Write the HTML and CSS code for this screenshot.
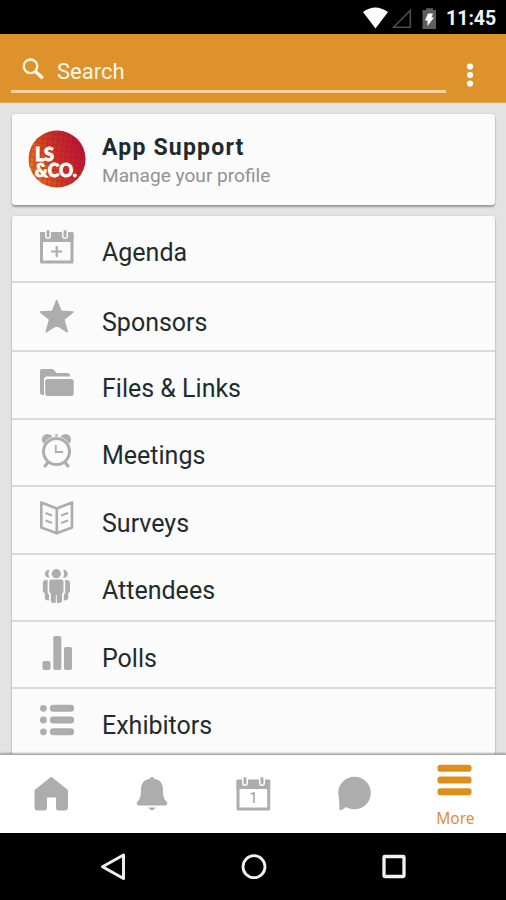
FILE: index.html
```
<!DOCTYPE html>
<html lang="en">
<head>
    <meta charset="UTF-8">
    <meta name="viewport" content="width=device-width, initial-scale=1.0">
    <title>More</title>
    <link rel="stylesheet" href="styles.css">
</head>
<body>
    <div class="status-bar">
        <svg class="status-icons" width="76" height="24" viewBox="0 0 76 24">
            <path fill="#fff" d="M1 7Q13 -2 26 7L13.500 23.500Z"/>
            <path fill="none" stroke="#4d4d4d" stroke-width="1.600" d="M31.500 22.300L48.300 5.500V22.300Z"/>
            <path fill="#5e5e5e" d="M60.500 5H64V3.300H71V5H74V24H60.500Z"/>
            <path fill="#fff" d="M66 8.500H71L69.500 12.500H72L65.500 21V15.500H63Z"/>
        </svg>
        <span class="time">11:45</span>
    </div>

    <div class="header">
        <div class="search">
            <svg class="search-icon" width="24" height="24" viewBox="0 0 24 24">
                <circle cx="8.500" cy="9.300" r="6.800" fill="none" stroke="#fff8e6" stroke-width="2.300"/>
                <path stroke="#fff8e6" stroke-width="3.400" d="M13.500 14.500L20.800 21.300"/>
            </svg>
            <span class="search-text">Search</span>
        </div>
        <svg class="dots" width="8" height="26" viewBox="0 0 8 26">
            <g fill="#fff">
                <circle cx="4" cy="4.500" r="3.100"/>
                <circle cx="4" cy="13" r="3.100"/>
                <circle cx="4" cy="21.500" r="3.100"/>
            </g>
        </svg>
    </div>

    <div class="content">
        <div class="card profile">
            <svg class="avatar" width="58" height="58" viewBox="0 0 58 58">
                <defs>
                    <linearGradient id="avatarFill" x1="0" y1="0.700" x2="1" y2="0.300">
                        <stop offset="0" stop-color="#ed7a1c"/>
                        <stop offset="0.500" stop-color="#cf3426"/>
                        <stop offset="1" stop-color="#bd1038"/>
                    </linearGradient>
                    <pattern id="weave" width="5" height="5" patternUnits="userSpaceOnUse" patternTransform="rotate(8)">
                        <path d="M0 1H5M1 0V5" stroke="#8f1420" stroke-opacity="0.380" stroke-width="1.200"/>
                    </pattern>
                </defs>
                <circle cx="29" cy="29" r="28.500" fill="url(#avatarFill)"/>
                <circle cx="29" cy="29" r="28.500" fill="url(#weave)"/>
                <text class="avatar-text" x="7" y="31" textLength="19">LS</text>
                <text class="avatar-text" x="7" y="46.500" textLength="42" lengthAdjust="spacingAndGlyphs">&amp;CO.</text>
            </svg>
            <div class="profile-info">
                <div class="name">App Support</div>
                <div class="manage">Manage your profile</div>
            </div>
        </div>

        <div class="card menu">
            <div class="row">
                <svg class="icon" viewBox="0 0 36 36">
                    <path fill="none" stroke="#adadad" stroke-width="3" stroke-linejoin="round" d="M3.500 5V33H34V5"/>
                    <path fill="#adadad" d="M2 4Q2 3 3 3H34.500Q35.500 3 35.500 4V13H2Z"/>
                    <path stroke="#fbfbfb" stroke-width="6" stroke-linecap="round" d="M10 3V7M27 3V7"/>
                    <path stroke="#adadad" stroke-width="3" stroke-linecap="round" d="M10 2.500V7M27 2.500V7"/>
                    <path stroke="#adadad" stroke-width="2.200" d="M18.700 17V28M13.200 22.500H24.200"/>
                </svg>
                <span>Agenda</span>
            </div>
            <div class="row row-tall">
                <svg class="icon" viewBox="0 0 36 36">
                    <path fill="#adadad" stroke="#adadad" stroke-width="1.500" stroke-linejoin="round" d="M18.700 1.500L23 12.300L35 13L25.800 20.500L29.300 32.800L18.700 26L8.200 32.800L11.700 20.500L2.500 13L14.400 12.300Z"/>
                </svg>
                <span>Sponsors</span>
            </div>
            <div class="row">
                <svg class="icon" viewBox="0 0 36 36">
                    <path fill="#adadad" d="M2 6Q2 4 4 4H14Q15 4 16 5L18.500 8H30Q32 8 32 11.500H9Q6 11.500 6 14.500V30Q2 30.500 2 27Z"/>
                    <rect x="7.200" y="14" width="28.500" height="17" rx="2.500" fill="#adadad"/>
                </svg>
                <span>Files &amp; Links</span>
            </div>
            <div class="row">
                <svg class="icon" viewBox="0 0 36 36">
                    <g fill="#adadad">
                        <circle cx="9.500" cy="6.500" r="5.500"/>
                        <circle cx="27.500" cy="6.500" r="5.500"/>
                        <rect x="17.300" y="1" width="2.200" height="3"/>
                    </g>
                    <circle cx="18.500" cy="18.500" r="15" fill="#fbfbfb"/>
                    <path stroke="#adadad" stroke-width="3.200" stroke-linecap="round" d="M9.500 30L7 33M27.500 30L30 33"/>
                    <circle cx="18.500" cy="18.500" r="13" fill="none" stroke="#adadad" stroke-width="3"/>
                    <path fill="none" stroke="#adadad" stroke-width="1.800" d="M17.800 12V19H25"/>
                </svg>
                <span>Meetings</span>
            </div>
            <div class="row">
                <svg class="icon" viewBox="0 0 36 36">
                    <path fill="none" stroke="#adadad" stroke-width="2.700" stroke-linejoin="round" d="M3.300 2.500L18.800 8.500L34 2.500V27.500L18.800 33.300L3.300 27.500ZM18.800 8.500V33"/>
                    <path stroke="#adadad" stroke-width="2.200" d="M7.500 13L14 15.500M7.500 20.500L14 23M23 15.500L30 13M23 23L30 20.500"/>
                </svg>
                <span>Surveys</span>
            </div>
            <div class="row">
                <svg class="icon" viewBox="0 0 36 36">
                    <g fill="#adadad">
                        <circle cx="18.300" cy="5.700" r="4.600"/>
                        <path d="M11.500 1.800Q7 2 7 6Q7 9.500 11.500 10Q9.500 6 11.500 1.800ZM25.300 1.800Q29.700 2 29.700 6Q29.700 9.500 25.300 10Q27 6 25.300 1.800Z"/>
                        <path d="M14 11.500H23Q25.500 11.500 25.500 14.500V23.500Q25.500 25 24 25V32Q24 35 21.500 35H20Q18.800 35 18.800 33.500V27H17.800V33.500Q17.800 35 16.500 35H15Q12.800 35 12.800 32V25Q11.200 25 11.200 23.500V14.500Q11.200 11.500 14 11.500Z"/>
                        <path d="M9.600 12Q4.800 11.500 4.800 15V23Q4.800 24.500 6.800 25V30Q7 32.500 11 32.500V26.500Q9.600 26 9.600 24ZM27.200 12Q32 11.500 32 15V23Q32 24.500 30.200 25V30Q30 32.500 25.800 32.500V26.500Q27.200 26 27.200 24Z"/>
                    </g>
                </svg>
                <span>Attendees</span>
            </div>
            <div class="row">
                <svg class="icon" viewBox="0 0 36 36">
                    <g fill="#adadad">
                        <rect x="4.500" y="26" width="8" height="9" rx="1.800"/>
                        <rect x="15.300" y="1" width="8" height="34" rx="1.800"/>
                        <rect x="26" y="12" width="8" height="23" rx="1.800"/>
                    </g>
                </svg>
                <span>Polls</span>
            </div>
            <div class="row">
                <svg class="icon" viewBox="0 0 36 36">
                    <g fill="#adadad">
                        <circle cx="5.400" cy="6.300" r="3.400"/>
                        <circle cx="5.400" cy="18" r="3.400"/>
                        <circle cx="5.400" cy="29.800" r="3.400"/>
                        <rect x="12" y="2.800" width="24" height="7" rx="3"/>
                        <rect x="12" y="14.500" width="24" height="7" rx="3"/>
                        <rect x="12" y="26.300" width="24" height="7" rx="3"/>
                    </g>
                </svg>
                <span>Exhibitors</span>
            </div>
        </div>
    </div>

    <div class="tab-bar">
        <div class="tab">
            <svg class="icon" viewBox="0 0 36 36">
                <path fill="#adadad" stroke="#adadad" stroke-width="2" stroke-linejoin="round" d="M18.300 2L34 14.500V31Q34 33.500 32 33.500H25.500Q24 33.500 24 31.500V20.500H13V31.500Q13 33.500 11.500 33.500H4.500Q2.500 33.500 2.500 31V14.500Z"/>
            </svg>
        </div>
        <div class="tab">
            <svg class="icon" viewBox="0 0 36 36">
                <path fill="#adadad" d="M18 1Q20 1 20.500 3C27 4 29 8 29 14C29 22 31 24 33 26Q34 29 31 29.500H5Q2 29 3 26C5 24 7 22 7 14C7 8 9 4 15.500 3Q16 1 18 1ZM14 31.500H22L18 34.700Z"/>
            </svg>
        </div>
        <div class="tab">
            <svg class="icon" viewBox="0 0 36 36">
                <path fill="none" stroke="#adadad" stroke-width="3" stroke-linejoin="round" d="M3 5V33H33.700V5"/>
                <path fill="#adadad" d="M1.500 4.500Q1.500 3.500 2.500 3.500H34Q35.200 3.500 35.200 4.500V13H1.500Z"/>
                <path stroke="#fff" stroke-width="6" stroke-linecap="round" d="M10 3V7M27 3V7"/>
                <path stroke="#adadad" stroke-width="3" stroke-linecap="round" d="M10 2.500V7M27 2.500V7"/>
                <text class="day" x="18.500" y="26.500">1</text>
            </svg>
        </div>
        <div class="tab">
            <svg class="icon" viewBox="0 0 36 36">
                <circle cx="18.500" cy="17" r="16.300" fill="#adadad"/>
                <path fill="#adadad" d="M3 22L3.500 34.500Q8 33.500 10 31L16 32Z"/>
            </svg>
        </div>
        <div class="tab tab-active">
            <svg class="icon" viewBox="0 0 36 36">
                <g fill="#dd8f1c">
                    <rect x="0.500" y="2.700" width="34" height="7" rx="2.800"/>
                    <rect x="0.500" y="14.500" width="34" height="7" rx="2.800"/>
                    <rect x="0.500" y="26.300" width="34" height="7" rx="2.800"/>
                </g>
            </svg>
            <span>More</span>
        </div>
    </div>

    <div class="nav-bar">
        <svg width="30" height="30" viewBox="0 0 30 30">
            <path fill="none" stroke="#eee" stroke-width="3" stroke-linejoin="round" d="M25.500 4V27.500L4.500 15.700Z"/>
        </svg>
        <svg width="30" height="30" viewBox="0 0 30 30">
            <circle cx="15" cy="15.700" r="11" fill="none" stroke="#f2f2f2" stroke-width="2.800"/>
        </svg>
        <svg width="30" height="30" viewBox="0 0 30 30">
            <rect x="5" y="5.500" width="20" height="20" rx="0.800" fill="none" stroke="#f2f2f2" stroke-width="3.300"/>
        </svg>
    </div>
</body>
</html>
```
FILE: styles.css
```
* {
    box-sizing: border-box;
}
body {
    margin: 0;
    width: 506px;
    height: 900px;
    display: flex;
    flex-direction: column;
    overflow: hidden;
    background-color: #e3e3e3;
    font-family: Roboto, "Liberation Sans", sans-serif;
}
svg {
    display: block;
    flex-shrink: 0;
}
.status-bar {
    height: 34px;
    flex-shrink: 0;
    display: flex;
    justify-content: flex-end;
    padding: 5px 9px 0 0;
    background-color: #000;
}
.time {
    width: 51px;
    margin-left: 8px;
    padding-top: 2px;
    color: #f2f2f2;
    font-size: 19.500px;
    font-weight: 700;
    line-height: 24px;
    white-space: nowrap;
}
.header {
    height: 69px;
    flex-shrink: 0;
    display: flex;
    padding-left: 11px;
    background-color: #de922c;
    border-bottom: 1px solid #e0a860;
}
.search {
    width: 435px;
    height: 59px;
    display: flex;
    padding: 23px 0 0 11px;
    border-bottom: 3px solid #f6cf9c;
}
.search-text {
    margin-left: 11px;
    color: #fff8e6;
    font-size: 22px;
    line-height: 30px;
}
.dots {
    margin: 28px 0 0 20px;
}

/* cards */
.content {
    flex: 1;
    min-height: 0;
    overflow: hidden;
    padding: 11px 11px 0 12px;
}
.card {
    background-color: #fbfbfb;
    border-radius: 3px;
    box-shadow: 0 2px 2px rgba(0, 0, 0, 0.3), 0 0 2px rgba(0, 0, 0, 0.15);
}
.profile {
    height: 91px;
    display: flex;
    margin-bottom: 11px;
    padding: 16px;
}
.profile-info {
    margin-left: 16px;
    padding-top: 1px;
    white-space: nowrap;
}
.name {
    color: #1f2b2d;
    font-size: 23px;
    font-weight: 700;
    letter-spacing: 1.200px;
    line-height: 34px;
}
.manage {
    color: #929292;
    font-size: 19.100px;
    line-height: 22px;
}
.avatar-text {
    fill: #fff;
    font-family: Lato, sans-serif;
    font-size: 18px;
    font-weight: 900;
    stroke: #fff;
    stroke-width: 0.800px;
}
.row {
    height: 67.400px;
    display: flex;
    padding: 13px 0 0 26px;
    border-bottom: 2px solid #d9d9d9;
    color: #1f2b2d;
    font-size: 25px;
    line-height: 30px;
}
.row span {
    margin: 8.600px 0 0 28px;
}
.row-tall {
    height: 69px;
    padding-top: 16px;
}
.icon {
    width: 36px;
    height: 36px;
}

/* bottom bars */
.tab-bar {
    height: 79px;
    flex-shrink: 0;
    display: flex;
    position: relative;
    background-color: #fff;
    border-top: 1px solid #a8a8a8;
    box-shadow: 0 -1px 2px rgba(0, 0, 0, 0.3);
}
.tab {
    flex: 1;
    display: flex;
    flex-direction: column;
    align-items: center;
    padding-top: 21px;
}
.tab-active {
    padding-top: 7px;
    color: #dd8f3a;
    font-family: "Noto Sans", sans-serif;
    font-size: 15.500px;
    line-height: 20px;
}
.tab-active span {
    margin-top: 10px;
}
.day {
    fill: #999;
    font-size: 14px;
    text-anchor: middle;
}
.nav-bar {
    height: 67px;
    flex-shrink: 0;
    display: flex;
    justify-content: center;
    gap: 110.500px;
    padding: 18px 0 0 1px;
    background-color: #000;
}
```
